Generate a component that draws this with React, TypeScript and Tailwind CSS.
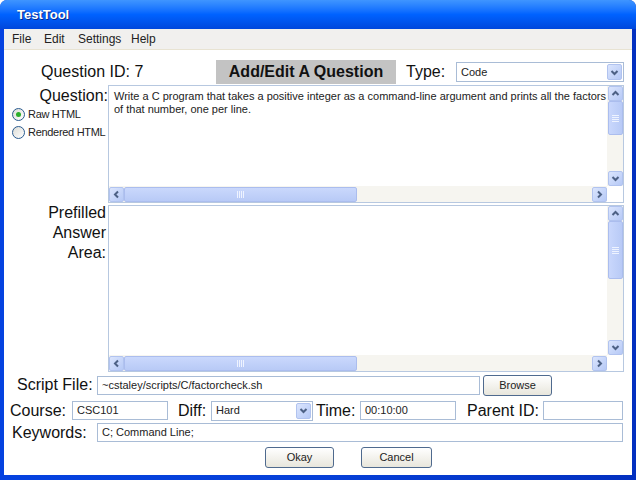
import React from 'react';

function Chevron({ dir }: { dir: 'up' | 'down' | 'left' | 'right' }) {
  const d = {
    up: 'M1.5 6 L4.5 3 L7.5 6',
    down: 'M1.5 3 L4.5 6 L7.5 3',
    left: 'M6 1.5 L3 4.5 L6 7.5',
    right: 'M3 1.5 L6 4.5 L3 7.5',
  }[dir];
  return (
    <svg width="9" height="9" viewBox="0 0 9 9">
      <path d={d} fill="none" stroke="#4d6185" strokeWidth="2" />
    </svg>
  );
}

function ArrowBtn({ dir }: { dir: 'up' | 'down' | 'left' | 'right' }) {
  return (
    <div className="w-[15px] h-[15px] shrink-0 rounded-[2px] border border-[#b1c3ef] bg-gradient-to-br from-[#dbe5fd] to-[#b6c9f6] flex items-center justify-center">
      <Chevron dir={dir} />
    </div>
  );
}

function VScroll({ thumb }: { thumb: string }) {
  return (
    <div className="w-[16px] h-full bg-[#f6f5f0] flex flex-col items-center">
      <ArrowBtn dir="up" />
      <div
        className={`${thumb} w-[15px] shrink-0 rounded-[2px] border border-[#abbdee] bg-gradient-to-r from-[#c9d7fc] to-[#b8caf6] flex flex-col items-center justify-center gap-[1px]`}
      >
        <div className="w-[7px] h-[1px] bg-[#eef3ff]" />
        <div className="w-[7px] h-[1px] bg-[#eef3ff]" />
        <div className="w-[7px] h-[1px] bg-[#eef3ff]" />
        <div className="w-[7px] h-[1px] bg-[#eef3ff]" />
      </div>
      <div className="flex-1" />
      <ArrowBtn dir="down" />
    </div>
  );
}

function HScroll() {
  return (
    <div className="flex-1 h-[16px] bg-[#f6f5f0] flex items-center">
      <ArrowBtn dir="left" />
      <div className="w-[233px] h-[15px] shrink-0 rounded-[2px] border border-[#abbdee] bg-gradient-to-b from-[#cad8fc] to-[#b8caf6] flex items-center justify-center gap-[1px]">
        <div className="w-[1px] h-[7px] bg-[#eef3ff]" />
        <div className="w-[1px] h-[7px] bg-[#eef3ff]" />
        <div className="w-[1px] h-[7px] bg-[#eef3ff]" />
        <div className="w-[1px] h-[7px] bg-[#eef3ff]" />
      </div>
      <div className="flex-1" />
      <ArrowBtn dir="right" />
    </div>
  );
}

function TextArea({ h, thumb, children }: { h: string; thumb: string; children?: React.ReactNode }) {
  return (
    <div className={`w-[516px] ${h} border border-[#b7c8e0] bg-white flex flex-col`}>
      <div className="flex-1 flex min-h-0">
        <div className="flex-1 pl-[5px] pt-[4px] text-[11px] leading-[13px] text-[#222]">{children}</div>
        <VScroll thumb={thumb} />
      </div>
      <div className="flex">
        <HScroll />
        <div className="w-[16px] h-[16px] bg-white" />
      </div>
    </div>
  );
}

function Input({ w, value }: { w: string; value?: string }) {
  return (
    <div className={`${w} h-[19px] border border-[#a9bcd6] bg-white pl-[4px] flex items-center text-[11px] text-[#222]`}>
      {value}
    </div>
  );
}

function Select({ w, value }: { w: string; value: string }) {
  return (
    <div className={`${w} h-[20px] border border-[#a9bcd6] bg-white flex items-center text-[11px] text-[#222]`}>
      <div className="flex-1 pl-[4px]">{value}</div>
      <div className="w-[15px] h-[16px] mr-[1px] rounded-[2px] border border-[#b1c3ef] bg-gradient-to-br from-[#dbe5fd] to-[#b6c9f6] flex items-center justify-center">
        <Chevron dir="down" />
      </div>
    </div>
  );
}

function Button({ w, label }: { w: string; label: string }) {
  return (
    <div className={`${w} h-[21px] rounded-[3px] border border-[#4f6a8e] bg-gradient-to-b from-[#ffffff] to-[#e8e6dc] flex items-center justify-center text-[11px] text-[#222]`}>
      {label}
    </div>
  );
}

function Radio({ checked, label }: { checked?: boolean; label: string }) {
  return (
    <div className="h-[18px] flex items-center pl-[8px] text-[11px] tracking-[-0.3px] whitespace-nowrap text-[#222]">
      <div className="w-[13px] h-[13px] shrink-0 rounded-full border border-[#2a5b8f] bg-gradient-to-br from-[#dcdcd6] to-[#ffffff] flex items-center justify-center">
        {checked && <div className="w-[5px] h-[5px] rounded-full bg-[#2bae2b]" />}
      </div>
      <span className="ml-[3px]">{label}</span>
    </div>
  );
}

export default function App() {
  return (
    <div className="w-[636px] h-[480px] bg-white font-['Liberation_Sans',Arial,sans-serif] text-[#111]">
      <div className="w-full h-full rounded-t-[7px] bg-gradient-to-r from-[#0542e0] via-[#0640d8] to-[#0330c0] flex flex-col overflow-hidden">
        {/* title bar */}
        <div className="h-[29px] shrink-0 bg-gradient-to-b from-[#3f95ff] via-[#0062ff] to-[#0047dc] flex items-center pl-[17px]">
          <span className="text-[13px] font-bold text-white [text-shadow:1px_1px_0_#0a2a8a]">TestTool</span>
        </div>
        <div className="flex-1 mx-[4px] mb-[5px] bg-white flex flex-col">
          {/* menu */}
          <div className="h-[21px] shrink-0 bg-[#f1f0ee] border-b border-[#e8e3d2] flex items-center pl-[8px] text-[12px] text-[#222]">
            <span className="w-[32px]">File</span>
            <span className="w-[34px]">Edit</span>
            <span className="w-[53px]">Settings</span>
            <span>Help</span>
          </div>

          {/* header row */}
          <div className="mt-[10px] h-[24px] flex items-center text-[16px]">
            <span className="pl-[37px] w-[212px]">Question ID: 7</span>
            <div className="w-[180px] h-[24px] bg-[#c3c3c3] flex items-center justify-center font-bold">
              Add/Edit A Question
            </div>
            <span className="w-[60px] pl-[10px]">Type:</span>
            <Select w="w-[168px]" value="Code" />
          </div>

          {/* question */}
          <div className="mt-[1px] flex">
            <div className="w-[104px] flex flex-col">
              <div className="mt-[2px] text-[16px] leading-[18px] text-right">Question:</div>
              <Radio checked label="Raw HTML" />
              <Radio label="Rendered HTML" />
            </div>
            <TextArea h="h-[118px]" thumb="h-[34px]">
              Write a C program that takes a positive integer as a command-line argument and prints all the factors of
              that number, one per line.
            </TextArea>
          </div>

          {/* prefilled answer */}
          <div className="mt-[2px] flex">
            <div className="w-[104px] mt-[-2px] pr-[2px] text-[16px] leading-[20px] text-right">
              Prefilled
              <br />
              Answer
              <br />
              Area:
            </div>
            <TextArea h="h-[167px]" thumb="h-[58px]" />
          </div>

          {/* script file */}
          <div className="mt-[2px] h-[22px] flex items-center text-[16px]">
            <span className="pl-[13px] w-[93px]">Script File:</span>
            <Input w="w-[383px]" value="~cstaley/scripts/C/factorcheck.sh" />
            <div className="ml-[3px]">
              <Button w="w-[69px]" label="Browse" />
            </div>
          </div>

          {/* course row */}
          <div className="mt-[4px] h-[21px] flex items-center text-[16px]">
            <span className="pl-[6px] w-[68px]">Course:</span>
            <Input w="w-[96px]" value="CSC101" />
            <span className="ml-[10px] w-[33px]">Diff:</span>
            <Select w="w-[102px]" value="Hard" />
            <span className="ml-[3px] w-[44px]">Time:</span>
            <Input w="w-[96px]" value="00:10:00" />
            <span className="ml-[11px] w-[76px]">Parent ID:</span>
            <Input w="w-[80px]" />
          </div>

          {/* keywords */}
          <div className="mt-[1px] h-[21px] flex items-center text-[16px]">
            <span className="pl-[8px] w-[93px]">Keywords:</span>
            <Input w="w-[526px]" value="C; Command Line;" />
          </div>

          {/* buttons */}
          <div className="mt-[4px] flex pl-[261px]">
            <Button w="w-[69px]" label="Okay" />
            <div className="ml-[27px]">
              <Button w="w-[71px]" label="Cancel" />
            </div>
          </div>
        </div>
      </div>
    </div>
  );
}
